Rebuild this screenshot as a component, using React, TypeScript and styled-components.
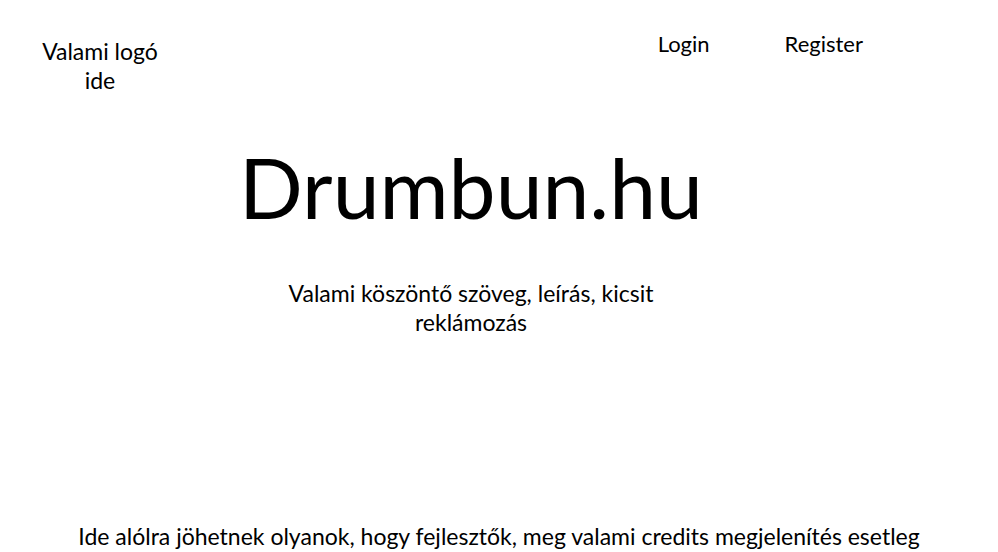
import React from "react";
import styled, { createGlobalStyle } from "styled-components";

const GlobalStyle = createGlobalStyle`
  * { box-sizing: border-box; }
  body {
    margin: 0;
    background: #fff;
    color: #000;
    font-family: Lato, "Open Sans", sans-serif;
    font-size: 23px;
    line-height: 29px;
  }
`;

const Page = styled.div`
  display: flex;
  flex-direction: column;
  min-height: 100vh;
`;

const Header = styled.header`
  display: flex;
  justify-content: space-between;
  align-items: flex-start;
  padding: 29px 135px 0 40px;
`;

const Logo = styled.a`
  width: 120px;
  padding-top: 8px;
  color: inherit;
  text-align: center;
  text-decoration: none;
`;

const Nav = styled.nav`
  display: flex;
  gap: 75px;
  font-size: 22px;
`;

const NavLink = styled.a`
  color: inherit;
  text-decoration: none;
`;

const Hero = styled.main`
  display: flex;
  flex: 1;
  flex-direction: column;
  align-items: center;
  padding: 36px 56px 0 0;
  text-align: center;
`;

const Title = styled.h1`
  margin: 0;
  font-size: 84px;
  font-weight: 400;
  line-height: 112px;
`;

const Welcome = styled.p`
  max-width: 400px;
  margin: 36px 0 0;
`;

const Footer = styled.footer`
  padding: 0 0 1px;
  text-align: center;
`;

export default function App() {
  return (
    <Page>
      <GlobalStyle />
      <Header>
        <Logo href="#">Valami logó ide</Logo>
        <Nav>
          <NavLink href="#login">Login</NavLink>
          <NavLink href="#register">Register</NavLink>
        </Nav>
      </Header>
      <Hero>
        <Title>Drumbun.hu</Title>
        <Welcome>Valami köszöntő szöveg, leírás, kicsit reklámozás</Welcome>
      </Hero>
      <Footer>Ide alólra jöhetnek olyanok, hogy fejlesztők, meg valami credits megjelenítés esetleg</Footer>
    </Page>
  );
}
